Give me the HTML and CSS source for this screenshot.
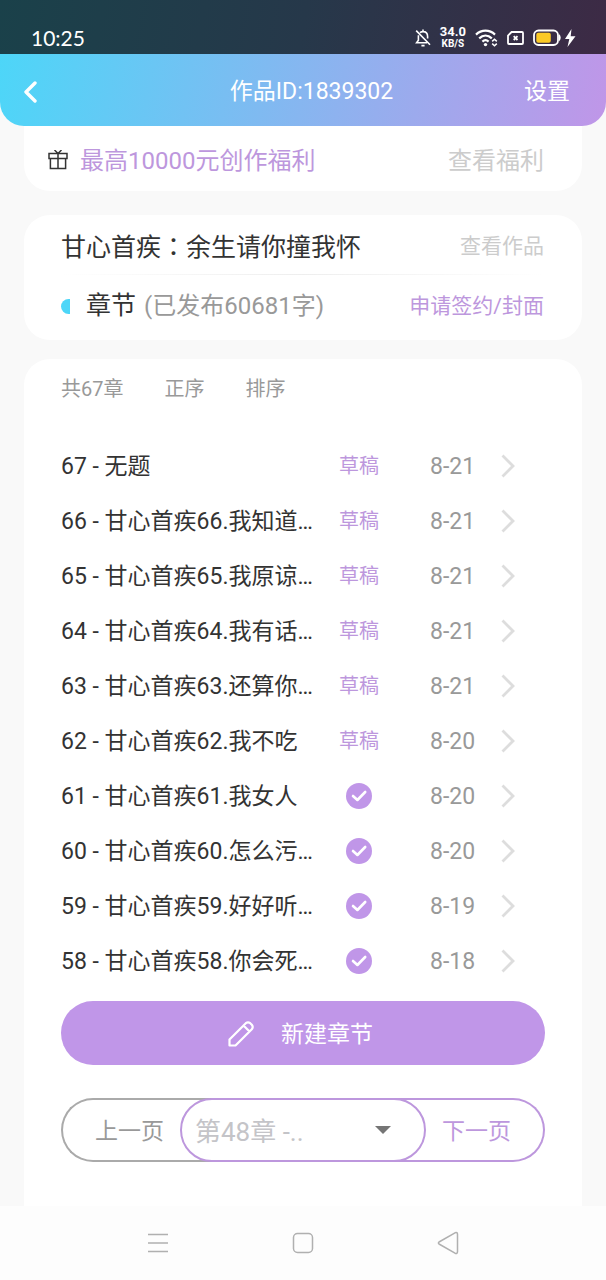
FILE: index.html
```
<!DOCTYPE html>
<html lang="zh-CN">
<head>
    <meta charset="UTF-8">
    <meta name="viewport" content="width=device-width, initial-scale=1">
    <title>作品ID:1839302</title>
    <link rel="stylesheet" href="styles.css">
</head>
<body>
    <svg class="symbols" aria-hidden="true">
        <symbol id="arrow" viewBox="0 0 14 24">
            <path d="M1.5 1.5 12 12 1.5 22.5" fill="none" stroke="currentColor" stroke-width="2.8"/>
        </symbol>
        <symbol id="check" viewBox="0 0 26 26">
            <circle cx="13" cy="13" r="13" fill="currentColor"/>
            <path d="M7 13 11.4 17 19.2 9" fill="none" stroke="#fff" stroke-width="2.6" stroke-linecap="round" stroke-linejoin="round"/>
        </symbol>
    </svg>

    <div class="status-bar">
        <span class="clock">10:25</span>
        <div class="status-icons">
            <svg width="16" height="18" viewBox="0 0 16 18" fill="none" stroke="currentColor" stroke-width="1.6">
                <path d="M5 3.6C6 2.8 7 2.6 8 2.6c3 0 4.6 2 4.6 4.8v2M3.4 6.2v5L1.6 13.8H12M8 .6v2M6.4 16.6h3.2M1.2 1.6 15 15.8"/>
            </svg>
            <span class="net-speed"><b>34.0</b><small>KB/S</small></span>
            <svg width="23" height="18" viewBox="0 0 23 18" fill="none" stroke="currentColor" stroke-width="2.2">
                <path d="M1 5.6C6.5 .4 14.5 .4 20 5.6M4.2 9.4C8 5.8 13 5.8 16.8 9.4M7.4 12.6C9.4 10.8 11.6 10.8 13.6 12.6"/>
                <circle cx="10.5" cy="15.6" r="1.7" fill="currentColor" stroke="none"/>
                <path d="m17.2 12.4 2.3-2.2 2.3 2.2M17.2 14.6l2.3 2.2 2.3-2.2" stroke-width="1.5"/>
            </svg>
            <svg width="17" height="14" viewBox="0 0 17 14" fill="none" stroke="currentColor" stroke-width="1.8">
                <path d="M4.6 1H15q1 0 1 1v10q0 1-1 1H2q-1 0-1-1V4.6Z"/>
                <path d="m6.7 5.2 3.8 3.8m0-3.8L6.7 9"/>
            </svg>
            <svg width="43" height="18" viewBox="0 0 43 18">
                <rect x="1" y="1.5" width="24" height="14.5" rx="4.5" fill="none" stroke="currentColor" stroke-width="1.8"/>
                <path d="M26 5q3.5 3.7 0 7.5" fill="currentColor"/>
                <rect x="3.3" y="3.8" width="14.5" height="10" rx="2" fill="#fbc926"/>
                <path d="M38.5 0 32 10h4.3L34.5 18 42.5 7.2h-4.8Z" fill="currentColor"/>
            </svg>
        </div>
    </div>

    <header class="header">
        <button class="back" type="button" aria-label="返回">
            <svg width="14" height="22" viewBox="0 0 14 22" fill="none" stroke="currentColor" stroke-width="3.4" stroke-linecap="round" stroke-linejoin="round">
                <path d="M12 2 3 11l9 9"/>
            </svg>
        </button>
        <h1>作品ID:1839302</h1>
        <a class="settings" href="#">设置</a>
    </header>

    <main class="content">
        <section class="card welfare">
            <svg width="20" height="22" viewBox="0 0 20 22" fill="none" stroke="#333" stroke-width="1.5">
                <path d="M1 3.5h18v5H1ZM2.4 8.5v10h15.2v-10M10 3.5v15M6.5 0 10 3.5 13.5 0"/>
            </svg>
            <span class="welfare-title">最高10000元创作福利</span>
            <a class="welfare-link" href="#">查看福利</a>
        </section>

        <section class="card book">
            <div class="book-row">
                <h2>甘心首疾<span class="colon" lang="zh-TW">：</span>余生请你撞我怀</h2>
                <a class="muted-link" href="#">查看作品</a>
            </div>
            <div class="divider"></div>
            <div class="book-row">
                <span class="dot"></span>
                <h2>章节</h2>
                <span class="word-count">(已发布60681字)</span>
                <a class="accent-link" href="#">申请签约/封面</a>
            </div>
        </section>

        <section class="card chapters">
            <div class="toolbar">
                <span>共67章</span>
                <button type="button">正序</button>
                <button type="button">排序</button>
            </div>

            <ul class="chapter-list">
                <li><a href="#"><span class="name">67 - 无题</span><span class="state">草稿</span><span class="date">8-21</span><svg class="arrow"><use href="#arrow"/></svg></a></li>
                <li><a href="#"><span class="name">66 - 甘心首疾66.我知道…</span><span class="state">草稿</span><span class="date">8-21</span><svg class="arrow"><use href="#arrow"/></svg></a></li>
                <li><a href="#"><span class="name">65 - 甘心首疾65.我原谅…</span><span class="state">草稿</span><span class="date">8-21</span><svg class="arrow"><use href="#arrow"/></svg></a></li>
                <li><a href="#"><span class="name">64 - 甘心首疾64.我有话…</span><span class="state">草稿</span><span class="date">8-21</span><svg class="arrow"><use href="#arrow"/></svg></a></li>
                <li><a href="#"><span class="name">63 - 甘心首疾63.还算你…</span><span class="state">草稿</span><span class="date">8-21</span><svg class="arrow"><use href="#arrow"/></svg></a></li>
                <li><a href="#"><span class="name">62 - 甘心首疾62.我不吃</span><span class="state">草稿</span><span class="date">8-20</span><svg class="arrow"><use href="#arrow"/></svg></a></li>
                <li><a href="#"><span class="name">61 - 甘心首疾61.我女人</span><span class="state"><svg class="check"><use href="#check"/></svg></span><span class="date">8-20</span><svg class="arrow"><use href="#arrow"/></svg></a></li>
                <li><a href="#"><span class="name">60 - 甘心首疾60.怎么污…</span><span class="state"><svg class="check"><use href="#check"/></svg></span><span class="date">8-20</span><svg class="arrow"><use href="#arrow"/></svg></a></li>
                <li><a href="#"><span class="name">59 - 甘心首疾59.好好听…</span><span class="state"><svg class="check"><use href="#check"/></svg></span><span class="date">8-19</span><svg class="arrow"><use href="#arrow"/></svg></a></li>
                <li><a href="#"><span class="name">58 - 甘心首疾58.你会死…</span><span class="state"><svg class="check"><use href="#check"/></svg></span><span class="date">8-18</span><svg class="arrow"><use href="#arrow"/></svg></a></li>
            </ul>

            <button class="new-chapter" type="button">
                <svg width="28" height="28" viewBox="0 0 28 28" fill="none" stroke="currentColor" stroke-width="2.2" stroke-linejoin="round">
                    <path d="M2.5 24.5V18.5L18.8 2.2Q21 .4 23.2 2.2L24.8 3.8Q26.6 6 24.8 8.2L8.5 24.5ZM16.5 4.5l6 6"/>
                </svg>
                新建章节
            </button>

            <nav class="pager" aria-label="分页">
                <button class="prev" type="button">上一页</button>
                <div class="page-select">
                    <select aria-label="选择章节">
                        <option>第48章 -..</option>
                    </select>
                    <svg width="16" height="8" viewBox="0 0 16 8"><path d="M0 0h16L8 8Z" fill="#757575"/></svg>
                </div>
                <button class="next" type="button">下一页</button>
            </nav>
        </section>
    </main>

    <footer class="system-nav">
        <button type="button" aria-label="菜单">
            <svg width="22" height="22" viewBox="0 0 22 22" fill="none" stroke="currentColor" stroke-width="1.5">
                <path d="M1 2.5h20M1 11h20M1 19.5h20"/>
            </svg>
        </button>
        <button type="button" aria-label="主页">
            <svg width="22" height="22" viewBox="0 0 22 22" fill="none" stroke="currentColor" stroke-width="1.5">
                <rect x="1.5" y="1.5" width="19" height="19" rx="4"/>
            </svg>
        </button>
        <button type="button" aria-label="后退">
            <svg width="22" height="24" viewBox="0 0 22 24" fill="none" stroke="currentColor" stroke-width="1.5" stroke-linejoin="round">
                <path d="M2 11Q.8 12 2 13L18 22.2Q20.5 23 20.5 20.8V3.2Q20.5 1 18 1.8Z"/>
            </svg>
        </button>
    </footer>
</body>
</html>
```
FILE: styles.css
```
:root {
    --cyan: #4dd6f8;
    --purple: #c096e8;
    --purple-text: #bd97dd;
    --text: #333;
    --gray: #999;
    --light-gray: #ccc;
    --page: #f9f9f9;
}

* {
    margin: 0;
    padding: 0;
    box-sizing: border-box;
}

body {
    min-height: 100vh;
    display: flex;
    flex-direction: column;
    background-color: var(--page);
    color: var(--text);
    font-family: Roboto, "Noto Sans CJK SC", sans-serif;
    font-size: 23px;
    line-height: 32px;
}

h1,
h2 {
    font-size: inherit;
    font-weight: 400;
}

button,
select {
    border: none;
    background: none;
    color: inherit;
    font: inherit;
    cursor: pointer;
}

a {
    color: inherit;
    text-decoration: none;
}

svg {
    display: block;
    flex-shrink: 0;
}

.symbols {
    position: absolute;
    width: 0;
    height: 0;
}

.status-bar {
    height: 54px;
    padding: 21px 30px 0 31px;
    display: flex;
    align-items: center;
    justify-content: space-between;
    background: linear-gradient(100deg, #1a414a, #26384a 50%, #3d2a45);
    color: #fff;
}

.clock {
    font-size: 21px;
    font-family: Lato, sans-serif;
}

.status-icons {
    display: flex;
    align-items: center;
    gap: 9px;
}

.net-speed {
    text-align: center;
    font-size: 13px;
    line-height: 12px;
}

.net-speed b,
.net-speed small {
    display: block;
    font-weight: 700;
}

.net-speed small {
    font-size: 10px;
    line-height: 11px;
}

.header {
    height: 72px;
    padding: 4px 36px 0 23px;
    display: grid;
    grid-template-columns: 1fr auto 1fr;
    align-items: center;
    background: linear-gradient(100deg, var(--cyan), var(--purple));
    border-radius: 0 0 24px 24px;
    color: #fff;
}

.header h1 {
    margin-left: 30px;
}

.back {
    justify-self: start;
}

.settings {
    justify-self: end;
}

.content {
    flex: 1;
    padding: 0 24px;
    display: flex;
    flex-direction: column;
}

.card {
    background-color: #fff;
    border-radius: 26px;
    padding: 0 37px;
}

.welfare {
    height: 65px;
    padding: 4px 38px 0 24px;
    display: flex;
    align-items: center;
    border-radius: 0 0 26px 26px;
    font-size: 24px;
}

.welfare-title {
    margin-left: 12px;
    color: var(--purple-text);
}

.welfare-link {
    margin-left: auto;
    color: var(--light-gray);
}

.book {
    height: 125px;
    margin-top: 24px;
    padding-right: 38px;
    font-size: 24px;
}

.book-row {
    height: 59px;
    padding-top: 3px;
    display: flex;
    align-items: center;
}

.book-row h2 {
    font-size: 25px;
}

/* the Traditional face centres the full-width colon */
.colon {
    font-family: "Noto Sans CJK TC", sans-serif;
}

.divider {
    height: 1px;
    background: linear-gradient(90deg, #fff, #eee 50%, #fff);
}

.dot {
    width: 9px;
    height: 15px;
    margin-right: 16px;
    border-radius: 9px 0 0 9px;
    background-color: var(--cyan);
}

.word-count {
    margin-left: 8px;
    color: var(--gray);
}

.muted-link,
.accent-link {
    margin-left: auto;
    font-size: 21px;
    color: var(--light-gray);
}

.accent-link {
    color: var(--purple-text);
}

.chapters {
    flex: 1;
    margin-top: 19px;
    padding-bottom: 44px;
    border-radius: 26px 26px 0 0;
}

.toolbar {
    height: 60px;
    display: flex;
    align-items: center;
    gap: 41px;
    font-size: 20px;
    color: var(--gray);
}

.chapter-list {
    padding: 19px 30px 0 0;
    list-style: none;
}

.chapter-list a {
    height: 55px;
    display: grid;
    grid-template-columns: 1fr 78px 103px 14px;
    align-items: center;
}

.name {
    padding-top: 2px;
    white-space: nowrap;
}

.state {
    display: flex;
    justify-content: center;
    font-size: 20px;
    color: var(--purple-text);
}

.date {
    padding: 2px 0 0 32px;
    color: var(--gray);
}

.check {
    width: 26px;
    height: 26px;
    color: var(--purple);
}

.arrow {
    width: 14px;
    height: 24px;
    color: #ddd;
}

.new-chapter {
    width: 100%;
    height: 64px;
    margin-top: 13px;
    padding: 3px 6px 0 0;
    display: flex;
    align-items: center;
    justify-content: center;
    gap: 26px;
    border-radius: 32px;
    background-color: var(--purple);
    color: #fff;
}

.pager {
    height: 64px;
    margin-top: 33px;
    display: flex;
}

.prev,
.next {
    flex: 1;
    padding-top: 4px;
    border: 2px solid #aaa;
    color: var(--gray);
}

.prev {
    margin-right: -32px;
    padding-right: 16px;
    border-right: none;
    border-radius: 32px 0 0 32px;
}

.next {
    margin-left: -32px;
    padding-left: 16px;
    border-color: var(--purple-text);
    border-left: none;
    border-radius: 0 32px 32px 0;
    color: var(--purple-text);
}

.page-select {
    position: relative;
    flex: 0 0 246px;
    display: flex;
    align-items: center;
    border: 2px solid var(--purple-text);
    border-radius: 32px;
    background-color: #fff;
}

.page-select select {
    width: 100%;
    height: 100%;
    padding: 4px 0 0 13px;
    appearance: none;
    border-radius: 32px;
    font-size: 26px;
    color: #c4c4c8;
}

.page-select svg {
    position: absolute;
    right: 33px;
    pointer-events: none;
}

.system-nav {
    height: 74px;
    padding: 0 86px 0 85px;
    display: grid;
    grid-template-columns: repeat(3, 1fr);
    place-items: center;
    background-color: #fdfdfd;
    color: #b0b0b0;
}
```
